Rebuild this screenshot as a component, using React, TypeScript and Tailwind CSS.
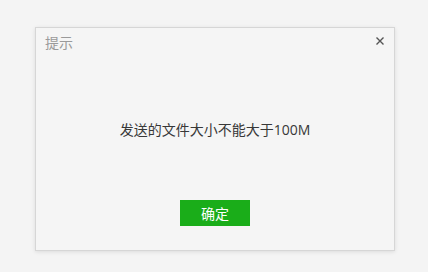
import React from "react";

export default function App() {
  return (
    <div
      className="w-[428px] h-[272px] bg-[#f4f4f4] pt-[27px] pl-[35px]"
      style={{ fontFamily: '"Noto Sans CJK SC", "Noto Sans", sans-serif' }}
    >
      <div className="w-[360px] h-[224px] bg-[#f5f5f5] border border-[#d6d6d6] shadow-[0_1px_4px_rgba(0,0,0,0.1)] flex flex-col">
        <div className="flex justify-between items-start pt-[4px] pl-[9px] pr-[10px]">
          <span className="text-[14px] leading-[20px] text-[#9a9a9a]">提示</span>
          <svg width="8" height="8" viewBox="0 0 8 8" className="mt-[5px]">
            <path d="M0.5 0.5 L7.5 7.5 M7.5 0.5 L0.5 7.5" stroke="#555" strokeWidth="1.4" />
          </svg>
        </div>
        <div
          className="mt-[68px] text-center text-[14px] leading-[20px] text-[#383838]"
          style={{ fontFamily: '"Open Sans", "Noto Sans CJK SC", sans-serif' }}
        >
          发送的文件大小不能大于100M
        </div>
        <div className="mt-[60px] flex justify-center">
          <button className="w-[70px] h-[26px] bg-[#1aad19] text-white text-[14px] leading-[26px]">
            确定
          </button>
        </div>
      </div>
    </div>
  );
}
